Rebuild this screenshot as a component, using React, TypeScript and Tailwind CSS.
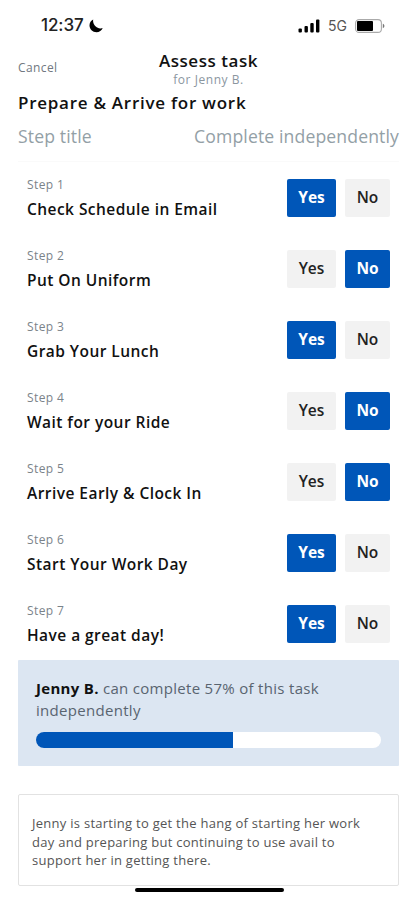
import { useState } from 'react';

type Answer = 'yes' | 'no';

interface Step {
  title: string;
  answer: Answer;
}

const initialSteps: Step[] = [
  { title: 'Check Schedule in Email', answer: 'yes' },
  { title: 'Put On Uniform', answer: 'no' },
  { title: 'Grab Your Lunch', answer: 'yes' },
  { title: 'Wait for your Ride', answer: 'no' },
  { title: 'Arrive Early & Clock In', answer: 'no' },
  { title: 'Start Your Work Day', answer: 'yes' },
  { title: 'Have a great day!', answer: 'yes' },
];

function StatusBar() {
  return (
    <div className="flex h-[50px] items-center justify-between pl-[41px] pr-[32px] pt-px font-['Inter',sans-serif]">
      <div className="flex items-center gap-[5px]">
        <span className="text-[17px] font-medium leading-none tracking-[-0.1px] text-[#222]">12:37</span>
        <svg width="14" height="14" viewBox="0 0 14 14" fill="#000">
          <path d="M4.2 0.6C2 1.6 0.5 3.8 0.5 6.3c0 3.9 3.1 7 7 7 2.8 0 5.2-1.7 6.2-4.2-0.9 0.3-1.7 0.4-2.5 0.3C7.800 9.100 5.200 6.600 4.300 3.500c-0.300-1-0.300-1.900-0.100-2.900z" />
        </svg>
      </div>
      <div className="flex items-center">
        <svg width="22" height="14" viewBox="0 0 22 14" fill="#000">
          <rect x="0.5" y="9.5" width="3.4" height="4" rx="1" />
          <rect x="6.5" y="7" width="3.4" height="6.5" rx="1" />
          <rect x="12.3" y="4" width="3.4" height="9.5" rx="1" />
          <rect x="18" y="0.5" width="3.4" height="13" rx="1" />
        </svg>
        <span className="ml-[8px] text-[14px] leading-none text-[#555]">5G</span>
        <svg className="ml-[8px]" width="30" height="14" viewBox="0 0 30 14">
          <rect x="0.6" y="0.6" width="25.8" height="12.8" rx="3.5" fill="none" stroke="#aaa" strokeWidth="1.1" />
          <rect x="2" y="2" width="16" height="10" rx="1" fill="#000" />
          <path d="M27.8 4.8c1 0.4 1.6 1.2 1.6 2.2s-0.6 1.8-1.6 2.2z" fill="#777" />
        </svg>
      </div>
    </div>
  );
}

interface AnswerButtonProps {
  label: string;
  selected: boolean;
  className: string;
  onClick: () => void;
}

function AnswerButton({ label, selected, className, onClick }: AnswerButtonProps) {
  return (
    <button
      onClick={onClick}
      className={`h-[38px] rounded-[2px] pt-px text-[15.5px] ${className} ${
        selected ? 'bg-[#0056b8] font-bold text-white' : 'bg-[#f2f2f2] font-semibold text-[#222]'
      }`}
    >
      {label}
    </button>
  );
}

export default function App() {
  const [steps, setSteps] = useState(initialSteps);

  const setAnswer = (index: number, answer: Answer) => {
    setSteps(prev => prev.map((step, i) => (i === index ? { ...step, answer } : step)));
  };

  const percent = Math.round((steps.filter(s => s.answer === 'yes').length / steps.length) * 100);

  return (
    <div className="flex h-[900px] w-[417px] flex-col overflow-hidden bg-white font-['Open_Sans','Noto_Sans',sans-serif]">
      <StatusBar />

      <header className="grid h-[42px] grid-cols-[1fr_auto_1fr] pl-[18px] pr-[18px]">
        <button className="mt-[10px] h-[16px] justify-self-start text-[12px] leading-[16px] tracking-[0.4px] text-[#707880]">
          Cancel
        </button>
        <div className="text-center">
          <h1 className="text-[17px] font-semibold leading-[22px] tracking-[0.55px] text-[#111]">Assess task</h1>
          <p className="text-[12px] leading-[16px] tracking-[0.55px] text-[#8b969f]">for Jenny B.</p>
        </div>
      </header>

      <h2 className="pl-[18px] text-[17px] font-semibold leading-[22px] tracking-[0.73px] text-[#111]">
        Prepare & Arrive for work
      </h2>

      <div className="mx-[18px] flex h-[48px] justify-between border-b border-[#fafafa] pt-[10px] text-[17.6px] leading-[24px] tracking-[0.13px] text-[#93a0a6]">
        <span>Step title</span>
        <span>Complete independently</span>
      </div>

      <ul>
        {steps.map((step, i) => (
          <li key={step.title} className="flex h-[71px] items-center justify-between pl-[27px] pr-[27px]">
            <div>
              <p className="text-[12px] leading-[20px] tracking-[0.4px] text-[#7a838a]">Step {i + 1}</p>
              <p className="mt-[2px] text-[15.5px] font-semibold leading-[24px] tracking-[0.45px] text-[#111]">
                {step.title}
              </p>
            </div>
            <div className="flex gap-[9px]">
              <AnswerButton
                label="Yes"
                className="w-[49px]"
                selected={step.answer === 'yes'}
                onClick={() => setAnswer(i, 'yes')}
              />
              <AnswerButton
                label="No"
                className="w-[45px]"
                selected={step.answer === 'no'}
                onClick={() => setAnswer(i, 'no')}
              />
            </div>
          </li>
        ))}
      </ul>

      <section className="mx-[18px] mt-px h-[106px] rounded-[1px] bg-[#dce6f2] px-[18px] pt-[17px]">
        <p className="text-[15px] leading-[22px] tracking-[0.3px] text-[#596470]">
          <strong className="font-bold text-[#111]">Jenny B.</strong>
          {` can complete ${percent}% of this task independently`}
        </p>
        <div className="mt-[11px] h-[16px] overflow-hidden rounded-full bg-white">
          <div className="h-full bg-[#0056b8]" style={{ width: `${percent}%` }} />
        </div>
      </section>

      <section className="mx-[18px] mt-[28px] h-[92px] rounded-[2px] border border-[#e2e2e2] px-[13px] pt-[19px]">
        <p className="text-[13px] leading-[18.7px] tracking-[0.27px] text-[#555]">
          Jenny is starting to get the hang of starting her work day and preparing but continuing to use avail to
          support her in getting there.
        </p>
      </section>

      <div className="ml-[1px] mt-[2px] h-[4px] w-[149px] self-center rounded-full bg-black" />
    </div>
  );
}
